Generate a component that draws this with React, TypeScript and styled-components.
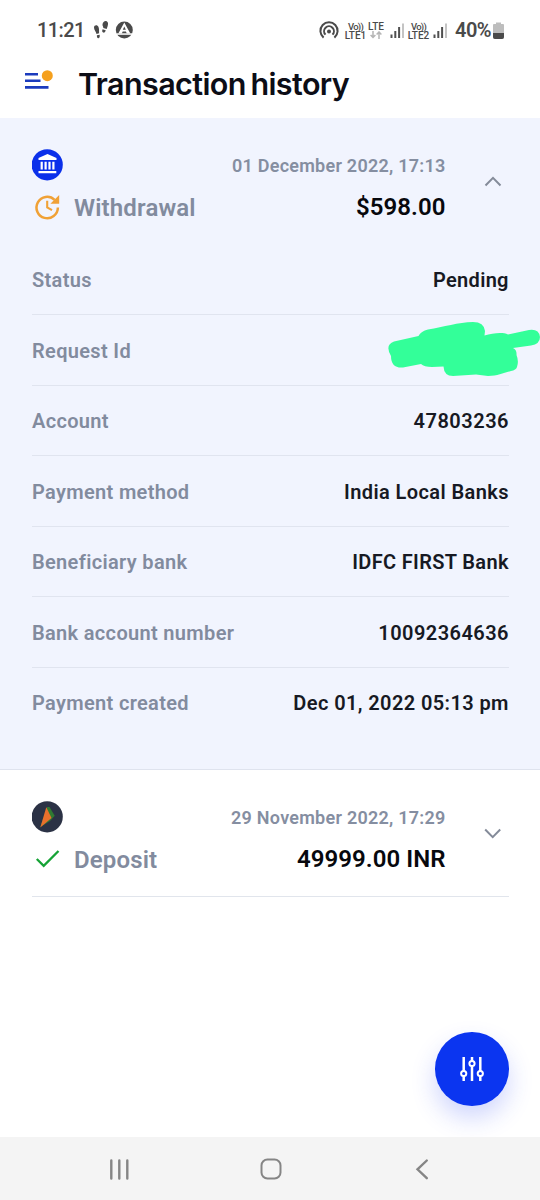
import React from "react";
import styled, { createGlobalStyle } from "styled-components";

const GlobalStyle = createGlobalStyle`
  * { box-sizing: border-box; }
  body { margin: 0; background: #fff; font-family: Roboto, "Liberation Sans", sans-serif; }
`;

const Screen = styled.div`
  position: relative;
  display: flex;
  flex-direction: column;
  width: 540px;
  height: 1200px;
  overflow: hidden;
  background: #fff;
`;

const StatusBar = styled.div`
  display: flex;
  align-items: center;
  justify-content: space-between;
  height: 60px;
  padding: 0 36px 0 37px;
  color: #4a4a4a;
`;

const StatusGroup = styled.div`
  display: flex;
  align-items: center;
`;

const StatusText = styled.span<{ $width: number; $spacing: number; $weight: number }>`
  width: ${(p) => p.$width}px;
  font-size: 20px;
  line-height: 24px;
  font-weight: ${(p) => p.$weight};
  letter-spacing: ${(p) => p.$spacing}px;
  white-space: nowrap;
`;

const Carrier = styled.div<{ $width: number }>`
  display: flex;
  flex-direction: column;
  align-items: center;
  width: ${(p) => p.$width}px;
  height: 18px;
  margin-top: 2px;
  font-size: 10px;
  line-height: 9px;
  font-weight: 500;
  white-space: nowrap;
`;

const Volte = styled.span`
  font-size: 9.5px;
  letter-spacing: -0.7px;
`;

const Header = styled.header`
  display: flex;
  align-items: center;
  height: 58px;
  padding-left: 24px;
`;

const MenuIcon = styled.svg`
  margin-top: -18px;
`;

const Title = styled.h1`
  margin: -10px 0 0 24px;
  font-family: Inter, sans-serif;
  font-size: 30.5px;
  line-height: 36px;
  font-weight: 600;
  letter-spacing: -0.6px;
  word-spacing: -2.5px;
  color: #0c0d16;
  white-space: nowrap;
`;

const Entry = styled.section<{ $open?: boolean }>`
  padding: 0 31.5px ${(p) => (p.$open ? 31 : 0)}px 32px;
  background: ${(p) => (p.$open ? "#f1f4fe" : "#fff")};
  border-bottom: ${(p) => (p.$open ? "1px solid #dfe3ee" : "none")};
`;

const Summary = styled.div<{ $height: number; $line?: boolean }>`
  display: flex;
  height: ${(p) => p.$height}px;
  padding-top: 31px;
  border-bottom: ${(p) => (p.$line ? "1.5px solid #e1e5ec" : "none")};
`;

const Kind = styled.div`
  display: flex;
  flex: 1;
  flex-direction: column;
  align-items: flex-start;
  svg { display: block; }
`;

const KindRow = styled.div`
  display: flex;
  align-items: center;
  height: 28px;
  margin-top: 12px;
`;

const KindName = styled.span`
  margin: 2px 0 0 11px;
  font-size: 24px;
  line-height: 28px;
  font-weight: 600;
  letter-spacing: 0.15px;
  color: #828b9e;
`;

const Figures = styled.div`
  display: flex;
  flex-direction: column;
  align-items: flex-end;
  padding-top: 5px;
`;

const When = styled.span`
  font-size: 18px;
  line-height: 24px;
  font-weight: 600;
  letter-spacing: 0.25px;
  color: #858ea1;
`;

const Amount = styled.span`
  margin-top: 15px;
  font-size: 24px;
  line-height: 28px;
  font-weight: 600;
  letter-spacing: 0.05px;
  color: #07080d;
`;

const Toggle = styled.div`
  width: 63px;
  padding: 26px 0 0 38px;
  svg { display: block; }
`;

const Detail = styled.div<{ $last?: boolean }>`
  display: flex;
  align-items: center;
  justify-content: space-between;
  height: 70.5px;
  padding-top: 2px;
  border-bottom: 1.5px solid ${(p) => (p.$last ? "transparent" : "#e0e4ef")};
  white-space: nowrap;
`;

const Label = styled.span`
  font-size: 20px;
  line-height: 24px;
  font-weight: 600;
  letter-spacing: 0.33px;
  color: #828b9e;
`;

const Value = styled.span<{ $spacing: number }>`
  font-size: 20px;
  line-height: 24px;
  font-weight: 600;
  letter-spacing: ${(p) => p.$spacing}px;
  margin-right: ${(p) => -p.$spacing}px;
  color: #171923;
`;

const Scribble = styled.svg`
  display: block;
  margin-right: -31.5px;
  margin-top: -3px;
`;

const FilterButton = styled.button`
  position: absolute;
  left: 435px;
  top: 1032px;
  display: flex;
  align-items: center;
  justify-content: center;
  width: 73.5px;
  height: 73.5px;
  padding: 0;
  border: 0;
  border-radius: 50%;
  background: #0b35f0;
  box-shadow: 0 12px 24px rgba(40, 70, 245, 0.22);
`;

const NavBar = styled.nav`
  position: relative;
  display: flex;
  align-items: center;
  justify-content: space-between;
  height: 63px;
  margin-top: auto;
  padding: 0 111px 0 108px;
  background: #f4f4f4;
  svg { overflow: visible; }
`;

const Signal = () => (
  <svg width="15" height="17" viewBox="0 0 15 17" fill="#505050">
    <rect x="0.5" y="12.5" width="2" height="3.5" />
    <rect x="4.3" y="9" width="2" height="7" />
    <rect x="8.1" y="5" width="2" height="11" />
    <rect x="12" y="1.5" width="2" height="14.5" fill="#c4c4c4" />
  </svg>
);

const Chevron = ({ up }: { up?: boolean }) => (
  <svg width="18" height="12" viewBox="0 0 18 12" fill="none" stroke="#848b99" strokeWidth="2">
    <path d={up ? "M1.5 10.500 9 2.900 16.500 10.500" : "M1.2 2.500 8.700 10.100 16.200 2.500"} />
  </svg>
);

const details: { label: string; value?: string; spacing?: number }[] = [
  { label: "Status", value: "Pending", spacing: 0.3 },
  { label: "Request Id" },
  { label: "Account", value: "47803236", spacing: 0.5 },
  { label: "Payment method", value: "India Local Banks", spacing: 0.4 },
  { label: "Beneficiary bank", value: "IDFC FIRST Bank", spacing: 0.35 },
  { label: "Bank account number", value: "10092364636", spacing: 0.45 },
  { label: "Payment created", value: "Dec 01, 2022 05:13 pm", spacing: 0.4 },
];

export default function App() {
  return (
    <Screen>
      <GlobalStyle />
      <StatusBar>
        <StatusGroup>
          <StatusText $width={56} $spacing={-0.6} $weight={500}>11:21</StatusText>
          <svg width="42" height="20" viewBox="0 0 42 20" fill="#4a4a4a">
            <path d="M1 7.5C1 5 4.500 4.500 5.500 7c.8 2 .5 4.200.6 6.200L3.500 14C3 11.500 1 10 1 7.500Z" />
            <path d="m3.900 15.300 2.700-.5c.6 2-.3 3.500-1.400 3.400-1 0-1.400-1.200-1.300-2.900Z" />
            <path d="M9.500 4.500C9.800 1.800 12 .500 13.900 1.400c2 1.200 1 4.500-.2 7.500L10.300 8c.2-1.200-1-2.200-.8-3.500Z" />
            <path d="m9.600 9.300 3.100.9c-.3 1.900-1.500 2.800-2.500 2.300-1.200-.4-1.300-1.500-.6-3.200Z" />
            <circle cx="31.300" cy="10" r="8.500" />
            <path d="M31.300 2.500 37.300 13.500h-3.500l-.9-1.900h-3.200l-.9 1.900h-3.500Z" fill="#fff" />
            <path d="m31.300 6.500 1.500 3.200h-3Z" />
            <path d="M23.500 13.300h15.600v1.500H23.500Z" fill="#fff" />
          </svg>
        </StatusGroup>
        <StatusGroup>
          <svg width="23" height="18" viewBox="0 0 23 18" fill="none" stroke="#4a4a4a" strokeWidth="2">
            <path d="M4.600 16.600A8.600 8.600 0 1 1 15.400 16.600" />
            <path d="M6.500 13.600A4.900 4.900 0 1 1 13.500 13.600" />
            <circle cx="10" cy="10.400" r="2" fill="#4a4a4a" stroke="none" />
          </svg>
          <Carrier $width={27}><Volte>Vo))</Volte><span>LTE1</span></Carrier>
          <Carrier $width={14}>
            <span>LTE</span>
            <svg width="12" height="8" viewBox="0 0 12 8" fill="none" stroke="#b5b5b5" strokeWidth="1.500">
              <path d="M3 0v6.500M.6 4 3 6.500 5.400 4M9 8V1M6.600 3.500 9 1l2.400 2.500" />
            </svg>
          </Carrier>
          <Carrier $width={28}><Signal /></Carrier>
          <Carrier $width={15}><Volte>Vo))</Volte><span>LTE2</span></Carrier>
          <Carrier $width={29}><Signal /></Carrier>
          <StatusText $width={38} $spacing={-0.5} $weight={600}>40%</StatusText>
          <svg width="11" height="17" viewBox="0 0 11 17">
            <path d="M3 2V.5h5V2h2a1 1 0 0 1 1 1v12a2 2 0 0 1-2 2H2a2 2 0 0 1-2-2V3a1 1 0 0 1 1-1Z" fill="#bdbdbd" />
            <path d="M0 11h11v4a2 2 0 0 1-2 2H2a2 2 0 0 1-2-2Z" fill="#4a4a4a" />
          </svg>
        </StatusGroup>
      </StatusBar>

      <Header>
        <MenuIcon width="30" height="20" viewBox="0 0 30 20">
          <path d="M1 4.300h13M1 10.700h15.500M1 17.400h23.500" stroke="#1b3bbd" strokeWidth="2.600" />
          <circle cx="23.300" cy="5.700" r="5.500" fill="#f5a01d" />
        </MenuIcon>
        <Title>Transaction history</Title>
      </Header>

      <Entry $open>
        <Summary $height={126.5}>
          <Kind>
            <svg width="31" height="32" viewBox="0 0 31 32" fill="#fff">
              <circle cx="15.200" cy="15.800" r="15.600" fill="#0b30ea" />
              <path d="M15.500 5 24.500 9v2H6.500V9Z" />
              <path d="M8.600 12.800h2.200v7.700H8.600Zm3.900 0h2.200v7.700h-2.200Zm3.900 0h2.200v7.700h-2.200Zm3.900 0h2.200v7.700h-2.200ZM6.500 22h17.800v2.200H6.500Z" />
            </svg>
            <KindRow>
              <svg width="31" height="28" viewBox="0 0 31 28" fill="none" stroke="#f0a136" strokeWidth="2.500">
                <path d="M22.600 6.800A10.700 10.700 0 1 0 25.900 14.600" />
                <path d="M27.200 2v8.800h-8.800Z" fill="#f0a136" stroke="none" />
                <path d="M15.200 7.800v6.700l4.800 2.700" strokeWidth="2.100" />
              </svg>
              <KindName>Withdrawal</KindName>
            </KindRow>
          </Kind>
          <Figures>
            <When>01 December 2022, 17:13</When>
            <Amount>$598.00</Amount>
          </Figures>
          <Toggle><Chevron up /></Toggle>
        </Summary>
        {details.map((d, i) => (
          <Detail key={d.label} $last={i === details.length - 1}>
            <Label>{d.label}</Label>
            {d.value ? (
              <Value $spacing={d.spacing ?? 0}>{d.value}</Value>
            ) : (
              <Scribble width="152" height="56" viewBox="388 321 152 56" fill="#33ff99">
                <path d="M394 341.500 418.500 336Q421 331 428 329.500C444 327 458 322.300 473 322Q484 322 485 331L484.500 335.500C493 333 503 332 508 334.500L529 330Q539 328.500 540 337 540 344 531 345.500L513 348Q517 350 516.500 355 519 361 517 367Q516 370 511 371C503 373 498 376 488 376L476 374.500 453 376Q444 376 443.500 366.500L432 367Q424 367 421 364L403 367.500Q391 368.500 391 356 384.500 345 394 341.500Z" />
              </Scribble>
            )}
          </Detail>
        ))}
      </Entry>

      <Entry>
        <Summary $height={127} $line>
          <Kind>
            <svg width="31" height="32" viewBox="0 0 31 32">
              <circle cx="15.200" cy="15.800" r="15.600" fill="#2b3245" />
              <path d="M15.200 6 17.500 6 22.700 14.700 18 20 8.300 26Z" fill="#307a32" />
              <path d="M14.300 6.300 19.500 17 8.300 26.500Z" fill="#ea702c" />
            </svg>
            <KindRow>
              <svg width="31" height="28" viewBox="0 0 31 28" fill="none" stroke="#16a336" strokeWidth="2.300">
                <path d="m4.800 14 6.900 6.800L26.500 6" />
              </svg>
              <KindName>Deposit</KindName>
            </KindRow>
          </Kind>
          <Figures>
            <When>29 November 2022, 17:29</When>
            <Amount>49999.00 INR</Amount>
          </Figures>
          <Toggle><Chevron /></Toggle>
        </Summary>
      </Entry>

      <FilterButton aria-label="Filters">
        <svg width="24" height="26" viewBox="0 0 24 26" fill="#0b35f0" stroke="#fff" strokeWidth="2.500">
          <path d="M3.700 1v24M12 1v24M20.300 1v24" />
          <circle cx="3.700" cy="17.500" r="2.600" strokeWidth="2" />
          <circle cx="12" cy="7.500" r="2.600" strokeWidth="2" />
          <circle cx="20.300" cy="17.500" r="2.600" strokeWidth="2" />
        </svg>
      </FilterButton>

      <NavBar>
        <svg width="22" height="22" viewBox="0 0 22 22" fill="none" stroke="#858585" strokeWidth="2.400" strokeLinecap="round">
          <path d="M3.300 2.500v18M11.300 2.500v18M19.300 2.500v18" />
        </svg>
        <svg width="24" height="24" viewBox="0 0 24 24" fill="none" stroke="#858585" strokeWidth="2">
          <rect x="0.500" y="2.500" width="19" height="19" rx="6" />
        </svg>
        <svg width="14" height="22" viewBox="0 0 14 22" fill="none" stroke="#858585" strokeWidth="2.400" strokeLinecap="round">
          <path d="M11.800 2.500 2.500 11.300l9.300 8.900" />
        </svg>
      </NavBar>
    </Screen>
  );
}
